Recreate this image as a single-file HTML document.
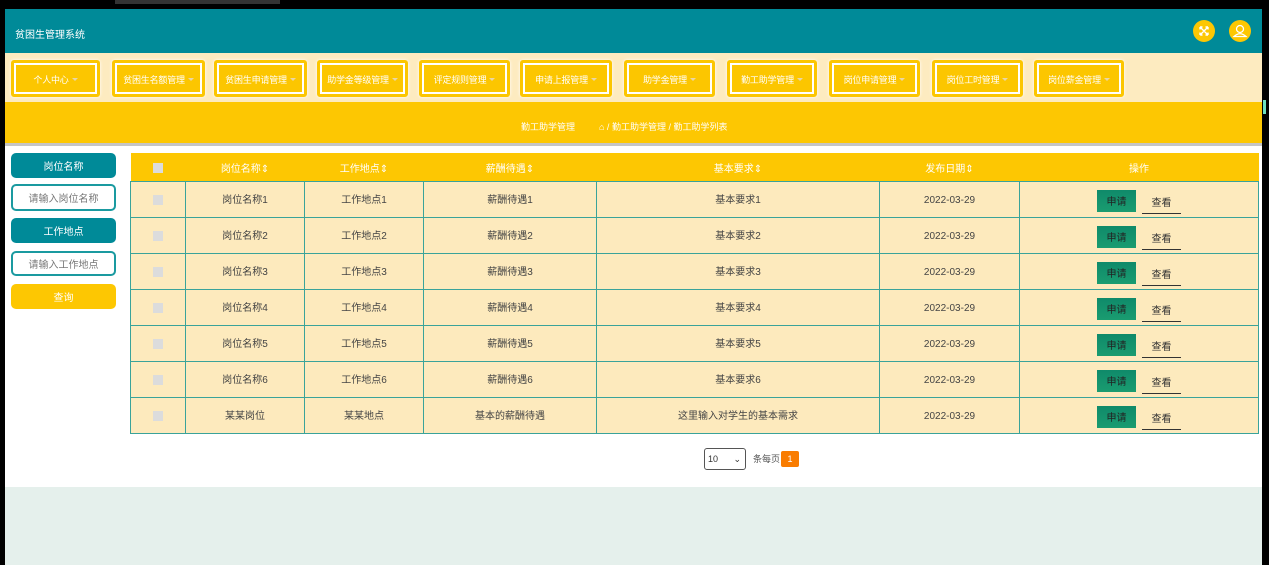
<!DOCTYPE html>
<html><head><meta charset="utf-8"><style>
*{box-sizing:border-box;margin:0;padding:0}
body{width:1269px;height:565px;overflow:hidden;background:#000;font-family:"Liberation Sans","Noto Sans CJK SC",sans-serif;position:relative}
.abs{position:absolute}
.hdr{left:5px;top:9px;width:1257px;height:44px;background:#008a98}
.nav{left:5px;top:53px;width:1257px;height:49px;background:#fdebc0}
.nb{position:absolute;top:7px;height:37px;border:3px solid #fcc600;border-radius:3px;box-shadow:0 0 3px #fff;background:#fff;padding:2px}
.nb div{background:#fcc600;height:100%;color:#fff;font-size:9px;display:flex;align-items:center;justify-content:center;white-space:nowrap;letter-spacing:-0.2px;padding-top:2px}
.nb div:after{content:"";border:3px solid transparent;border-top-color:#e8d6a8;margin-left:3px;margin-top:3px}
.ybar{left:5px;top:102px;width:1257px;height:41px;background:#fdc702;color:#fff;font-size:9px}
.main{left:5px;top:143px;width:1257px;height:344px;background:#fff;border-top:3px solid #c5c5c5}
.foot{left:5px;top:487px;width:1257px;height:78px;background:#e5f0ec}
.sb{position:absolute;left:11px;width:105px;border-radius:5px;font-size:10px;display:flex;align-items:center;justify-content:center}
table{position:absolute;left:130px;top:153px;width:1129px;border-collapse:collapse;font-size:10px;color:#444}
th{background:#fdc702;color:#fff;height:28px;font-weight:normal;vertical-align:middle;padding-top:2px}
td{background:#fdeabd;border:1px solid #3aa39a;height:36px;text-align:center;vertical-align:middle;line-height:14px;padding-top:3px}
td>div{display:flex;align-items:center;justify-content:center;height:30px}
.cb{display:inline-block;width:10px;height:10px;background:#dcdcdc;vertical-align:middle}
.ap{width:39px;height:22px;background:linear-gradient(#0f8a6a,#1a9c70);color:#222;display:block;text-align:center;line-height:26px;font-size:10px}
.vw{width:39px;margin-left:6px;border-bottom:1px solid #333;height:22px;display:block;text-align:center;line-height:24px;color:#333;margin-top:4px}
</style></head><body>
<div class="abs" style="left:115px;top:0;width:165px;height:4px;background:#333"></div>
<div class="abs hdr"><div class="abs" style="left:10px;top:17px;color:#fff;font-size:10px">贫困生管理系统</div>
<div class="abs" style="left:1188px;top:11px;width:22px;height:22px;border-radius:50%;background:#fdc702">
<svg width="22" height="22" fill="none" stroke="#fff" stroke-width="1.4"><path d="M7 7L15 15M15 7L7 15M7 7h2.5M7 7v2.5M15 7h-2.5M15 7v2.5M7 15h2.5M7 15v-2.5M15 15h-2.5M15 15v-2.5"/></svg></div>
<div class="abs" style="left:1224px;top:11px;width:22px;height:22px;border-radius:50%;background:#fdc702">
<svg width="22" height="22"><circle cx="11" cy="9" r="3.5" fill="none" stroke="#fff" stroke-width="1.3"/><path d="M5 16.5Q11 11 17 16.5Z" fill="none" stroke="#fff" stroke-width="1.3"/></svg></div></div>
<div class="abs nav">
<div class="nb" style="left:6px;width:89px"><div>个人中心</div></div>
<div class="nb" style="left:107px;width:93px"><div>贫困生名额管理</div></div>
<div class="nb" style="left:209px;width:93px"><div>贫困生申请管理</div></div>
<div class="nb" style="left:312px;width:91px"><div>助学金等级管理</div></div>
<div class="nb" style="left:414px;width:91px"><div>评定规则管理</div></div>
<div class="nb" style="left:515px;width:92px"><div>申请上报管理</div></div>
<div class="nb" style="left:619px;width:91px"><div>助学金管理</div></div>
<div class="nb" style="left:722px;width:90px"><div>勤工助学管理</div></div>
<div class="nb" style="left:824px;width:91px"><div>岗位申请管理</div></div>
<div class="nb" style="left:927px;width:91px"><div>岗位工时管理</div></div>
<div class="nb" style="left:1029px;width:90px"><div>岗位薪金管理</div></div>
</div>
<div class="abs ybar"><span class="abs" style="left:516px;top:18px">勤工助学管理</span><span class="abs" style="left:594px;top:18px">⌂ / 勤工助学管理 / 勤工助学列表</span></div>
<div class="abs main"></div>
<div class="abs foot"></div>
<div class="sb" style="top:153px;height:25px;background:#008a98;color:#fff">岗位名称</div>
<div class="sb" style="top:184px;height:27px;border:2px solid #1a9aa0;background:#fff;color:#777">请输入岗位名称</div>
<div class="sb" style="top:218px;height:25px;background:#008a98;color:#fff">工作地点</div>
<div class="sb" style="top:251px;height:25px;border:2px solid #1a9aa0;background:#fff;color:#777">请输入工作地点</div>
<div class="sb" style="top:284px;height:25px;background:#fdc702;color:#fff">查询</div>
<table>
<tr><th style="width:55px"><span class="cb"></span></th><th style="width:119px">岗位名称⇕</th><th style="width:119px">工作地点⇕</th><th style="width:173px">薪酬待遇⇕</th><th style="width:283px">基本要求⇕</th><th style="width:140px">发布日期⇕</th><th>操作</th></tr>
<tr><td><span class="cb"></span></td><td>岗位名称1</td><td>工作地点1</td><td>薪酬待遇1</td><td>基本要求1</td><td>2022-03-29</td><td><div><span class="ap">申请</span><span class="vw">查看</span></div></td></tr>
<tr><td><span class="cb"></span></td><td>岗位名称2</td><td>工作地点2</td><td>薪酬待遇2</td><td>基本要求2</td><td>2022-03-29</td><td><div><span class="ap">申请</span><span class="vw">查看</span></div></td></tr>
<tr><td><span class="cb"></span></td><td>岗位名称3</td><td>工作地点3</td><td>薪酬待遇3</td><td>基本要求3</td><td>2022-03-29</td><td><div><span class="ap">申请</span><span class="vw">查看</span></div></td></tr>
<tr><td><span class="cb"></span></td><td>岗位名称4</td><td>工作地点4</td><td>薪酬待遇4</td><td>基本要求4</td><td>2022-03-29</td><td><div><span class="ap">申请</span><span class="vw">查看</span></div></td></tr>
<tr><td><span class="cb"></span></td><td>岗位名称5</td><td>工作地点5</td><td>薪酬待遇5</td><td>基本要求5</td><td>2022-03-29</td><td><div><span class="ap">申请</span><span class="vw">查看</span></div></td></tr>
<tr><td><span class="cb"></span></td><td>岗位名称6</td><td>工作地点6</td><td>薪酬待遇6</td><td>基本要求6</td><td>2022-03-29</td><td><div><span class="ap">申请</span><span class="vw">查看</span></div></td></tr>
<tr><td><span class="cb"></span></td><td>某某岗位</td><td>某某地点</td><td>基本的薪酬待遇</td><td>这里输入对学生的基本需求</td><td>2022-03-29</td><td><div><span class="ap">申请</span><span class="vw">查看</span></div></td></tr>
</table>
<div class="abs" style="left:704px;top:448px;width:42px;height:22px;border:1px solid #555;border-radius:3px;background:#fff;font-size:9px;color:#333;line-height:20px;padding-left:3px">10<span style="position:absolute;right:4px;top:0;font-size:9px">⌄</span></div>
<div class="abs" style="left:753px;top:453px;font-size:9px;color:#555;line-height:12px">条每页</div>
<div class="abs" style="left:781px;top:451px;width:18px;height:16px;background:#f97c00;border-radius:2px;color:#fff;font-size:9px;text-align:center;line-height:16px">1</div>
<div class="abs" style="left:1263px;top:100px;width:3px;height:14px;background:#6ee0c0"></div>
</body></html>
